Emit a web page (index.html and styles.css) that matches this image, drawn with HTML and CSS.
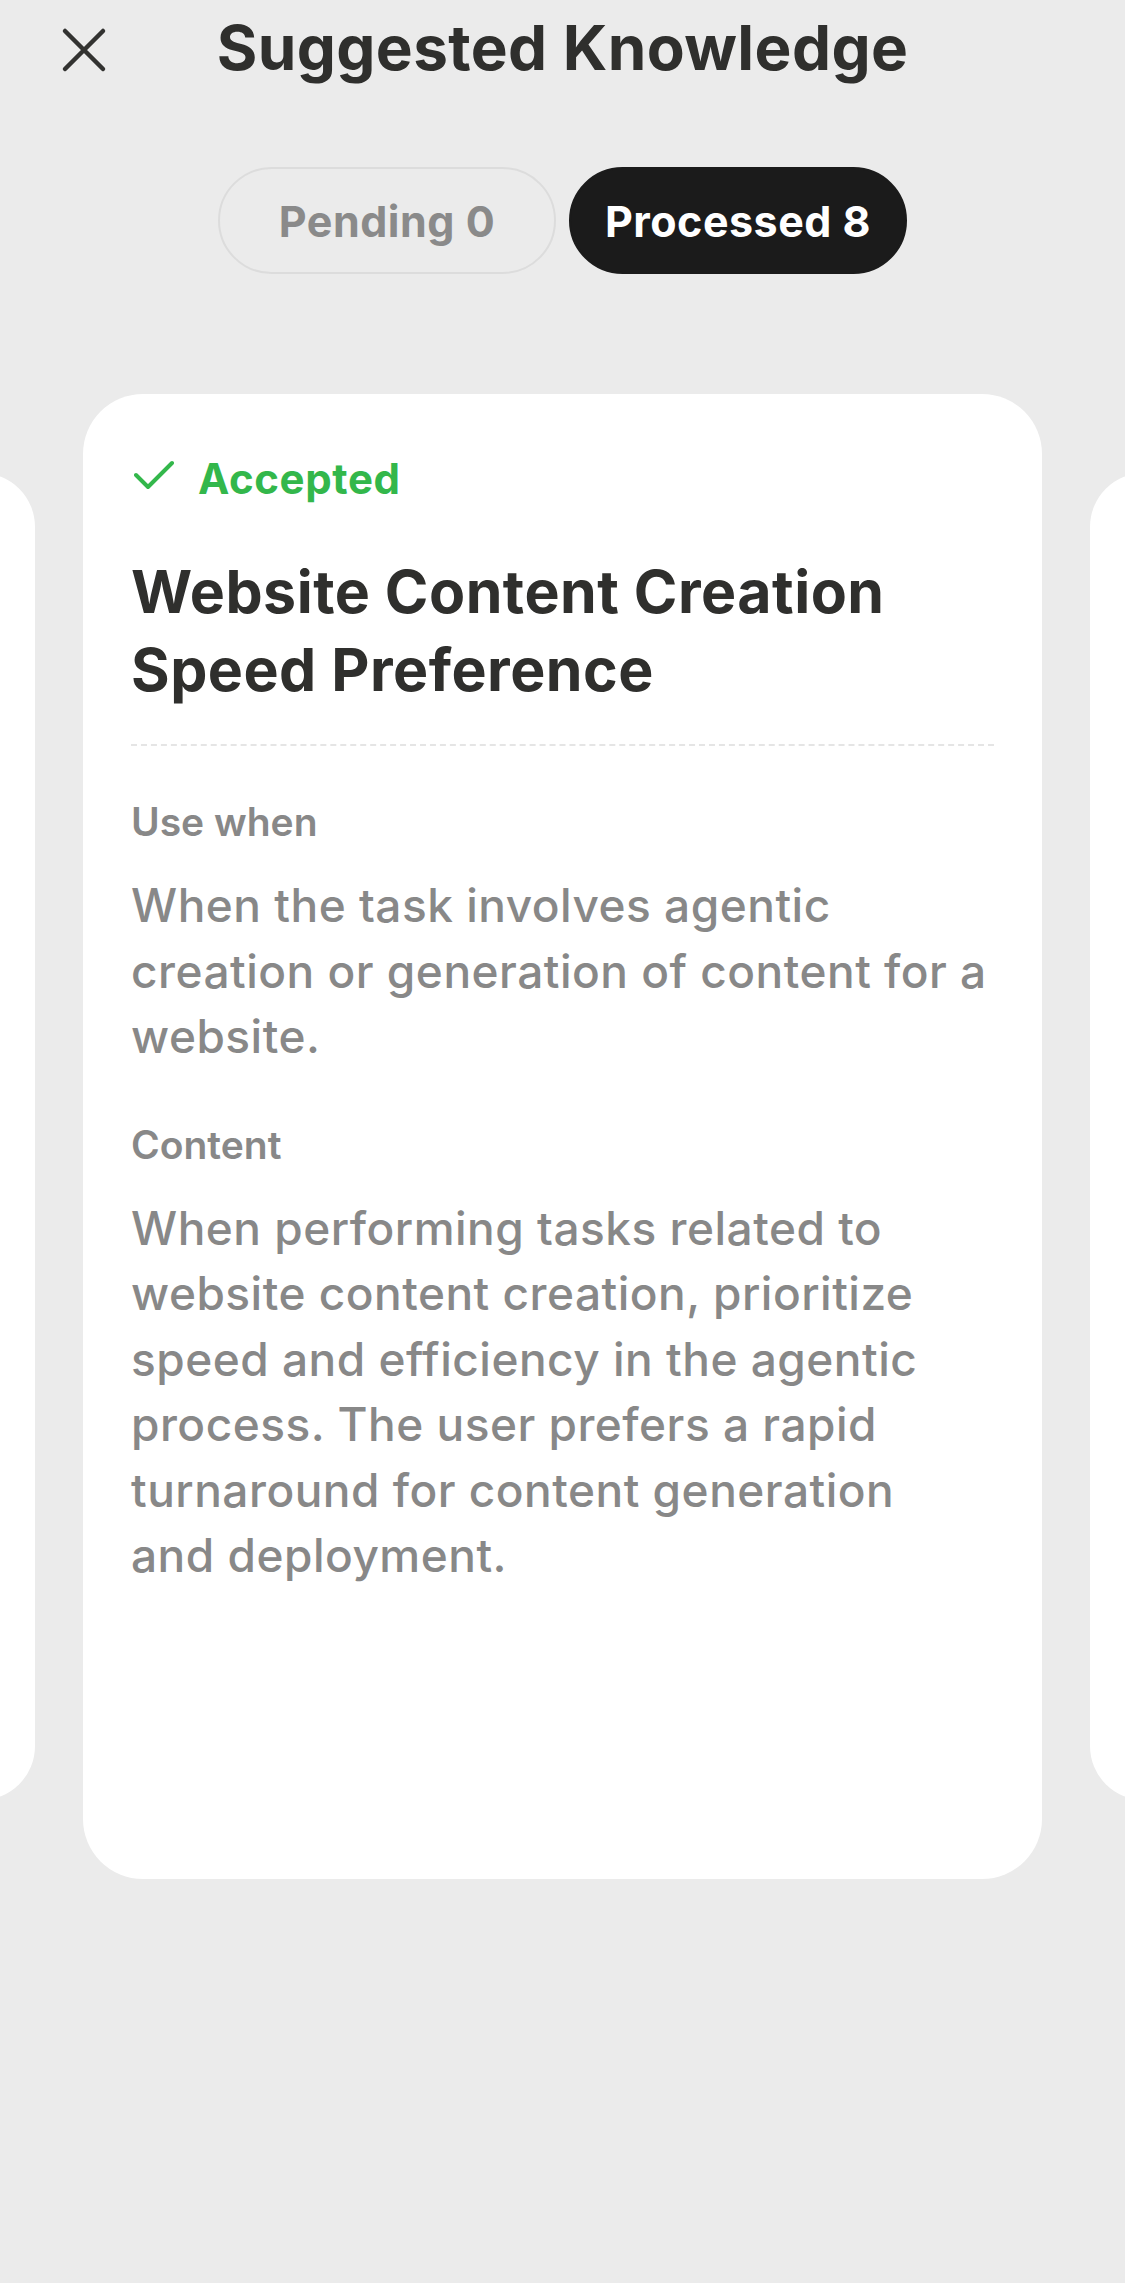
FILE: index.html
```html
<!DOCTYPE html>
<html lang="en">
<head>
<meta charset="utf-8">
<title>Suggested Knowledge</title>
<link rel="stylesheet" href="styles.css">
</head>
<body>
<div class="screen">
  <header class="header">
    <button class="close" aria-label="Close">
      <svg width="46" height="46" viewBox="0 0 46 46"><path d="M4 4 L42 42 M42 4 L4 42" stroke="#323230" stroke-width="4.5" stroke-linecap="round" fill="none"/></svg>
    </button>
    <h1 class="title">Suggested Knowledge</h1>
    <span class="spacer"></span>
  </header>

  <nav class="tabs">
    <div class="tab">Pending 0</div>
    <div class="tab active">Processed 8</div>
  </nav>

  <section class="carousel">
    <div class="side-card"></div>
    <article class="card">
      <div class="status">
        <svg class="check" width="40" height="30" viewBox="0 0 40 30"><path d="M2 15 L14 27 L38 3" stroke="#33b74b" stroke-width="4" stroke-linecap="round" stroke-linejoin="round" fill="none"/></svg>
        <span>Accepted</span>
      </div>
      <h2 class="card-title">Website Content Creation Speed Preference</h2>
      <hr class="divider">
      <div class="label">Use when</div>
      <p class="body">When the task involves agentic creation or generation of content for a website.</p>
      <div class="label second">Content</div>
      <p class="body content">When performing tasks related to website content creation, prioritize speed and efficiency in the agentic process. The user prefers a rapid turnaround for content generation and deployment.</p>
    </article>
    <div class="side-card"></div>
  </section>
</div>
</body>
</html>
```

FILE: styles.css
```css
* { box-sizing: border-box; }

html, body {
  margin: 0;
  padding: 0;
  background: #ebebeb;
}

body {
  font-family: Inter, "Noto Sans", "Liberation Sans", sans-serif;
  width: 1125px;
  height: 2283px;
  overflow: hidden;
}

.screen {
  display: flex;
  flex-direction: column;
}

.header {
  display: grid;
  grid-template-columns: 1fr auto 1fr;
  align-items: center;
  height: 100px;
  padding: 0 61px;
}

.close {
  width: 46px;
  height: 46px;
  padding: 0;
  border: 0;
  background: none;
  display: flex;
  align-items: center;
  justify-content: center;
  justify-self: start;
}

.title {
  margin: 0;
  font-size: 62px;
  line-height: 72px;
  font-weight: 700;
  color: #2f2f2d;
  letter-spacing: 0.4px;
  margin-top: -4px;
  white-space: nowrap;
}

.tabs {
  display: flex;
  justify-content: center;
  gap: 13px;
  margin-top: 67px;
}

.tab {
  width: 338px;
  height: 107px;
  border-radius: 54px;
  display: flex;
  align-items: center;
  justify-content: center;
  font-size: 43px;
  letter-spacing: 0.5px;
  font-weight: 700;
  color: #8a8a8a;
  border: 2px solid #dcdcdc;
  background: #ebebeb;
}

.tab.active {
  background: #1b1b1b;
  border-color: #1b1b1b;
  color: #ffffff;
}

.carousel {
  display: flex;
  justify-content: center;
  align-items: center;
  gap: 48px;
  margin-top: 120px;
  overflow: hidden;
}

.side-card {
  flex: none;
  width: 857px;
  height: 1327px;
  border-radius: 54px;
  background: #ffffff;
}

.card {
  flex: none;
  width: 959px;
  height: 1485px;
  border-radius: 60px;
  background: #ffffff;
  padding: 61px 40px 0 48px;
}

.status {
  display: flex;
  align-items: center;
  gap: 24px;
  height: 48px;
  padding-left: 3px;
  font-size: 42px;
  letter-spacing: 0.6px;
  line-height: 48px;
  font-weight: 700;
  color: #33b74b;
}

.check { flex: none; margin-top: -8px; }

.card-title {
  margin: 50px 0 0 0;
  font-size: 59px;
  line-height: 77.5px;
  font-weight: 700;
  color: #2f2f2d;
  letter-spacing: 0.5px;
}

.divider {
  margin: 36px 8px 0 0;
  border: 0;
  border-top: 2px dashed #e5e5e5;
  height: 0;
}

.label {
  margin-top: 52px;
  font-size: 39px;
  line-height: 48px;
  font-weight: 600;
  color: #888888;
}

.label.second { margin-top: 51px; }

.body {
  margin: 27px 0 0 0;
  font-size: 46px;
  letter-spacing: 0.5px;
  line-height: 65.5px;
  font-weight: 500;
  color: #888888;
}

.body.content {
  max-width: 820px;
}
```
